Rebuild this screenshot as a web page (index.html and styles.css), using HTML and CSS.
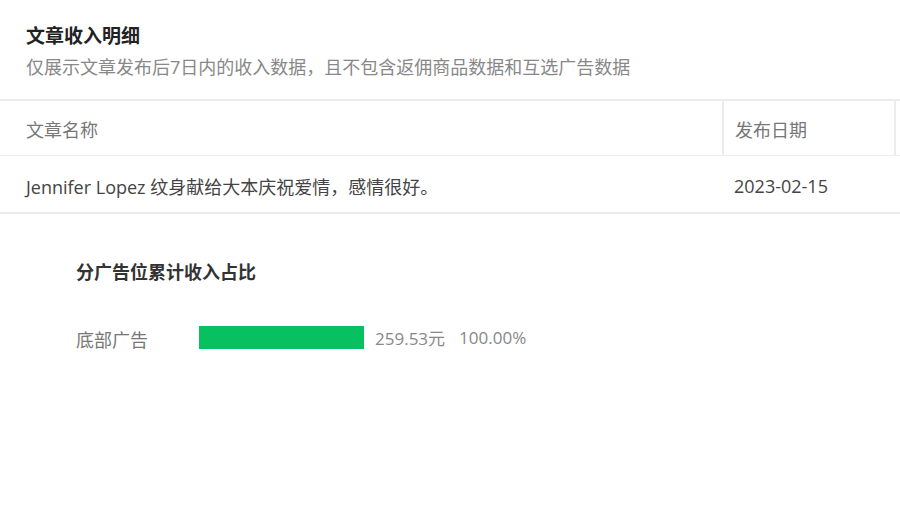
FILE: index.html
```html
<!DOCTYPE html>
<html lang="zh-CN">
<head>
    <meta charset="UTF-8">
    <title>文章收入明细</title>
    <link rel="stylesheet" href="styles.css">
</head>
<body>
    <div class="page">
        <div class="page-header">
            <h2 class="page-title">文章收入明细</h2>
            <p class="page-desc">仅展示文章发布后7日内的收入数据，且不包含返佣商品数据和互选广告数据</p>
        </div>

        <div class="table-wrap">
            <table class="income-table">
                <thead>
                    <tr>
                        <th class="col-title">文章名称</th>
                        <th class="col-date">发布日期</th>
                        <th class="col-more"></th>
                    </tr>
                </thead>
                <tbody>
                    <tr>
                        <td>Jennifer Lopez 纹身献给大本庆祝爱情，感情很好。</td>
                        <td>2023-02-15</td>
                        <td></td>
                    </tr>
                </tbody>
            </table>
        </div>

        <div class="ad-share">
            <h3 class="ad-share-title">分广告位累计收入占比</h3>
            <div class="ad-row">
                <span class="ad-name">底部广告</span>
                <div class="ad-bar-track">
                    <div class="ad-bar" style="width: 100%"></div>
                </div>
                <span class="ad-amount">259.53元</span>
                <span class="ad-percent">100.00%</span>
            </div>
        </div>
    </div>
</body>
</html>
```

FILE: styles.css
```css
:root {
    --text-main: #333333;
    --text-secondary: #888888;
    --text-header: #777777;
    --line-color: #ececec;
    --brand-green: #07c160;
}

body {
    margin: 0;
    background-color: #ffffff;
    font-family: "Open Sans", "Noto Sans CJK SC", sans-serif;
    color: var(--text-main);
}

.page {
    overflow: hidden;
}

.page-header {
    padding: 22px 26px 18px;
}

.page-title {
    margin: 0;
    font-size: 19px;
    line-height: 28px;
    font-weight: 700;
    color: #222222;
}

.page-desc {
    margin: 3px 0 0;
    font-size: 18px;
    line-height: 28px;
    color: var(--text-secondary);
}

/* table runs past the right edge, as in the cropped view */
.table-wrap {
    width: 1100px;
}

.income-table {
    width: 100%;
    border-collapse: collapse;
    font-size: 18px;
    text-align: left;
}

.income-table th {
    height: 52px;
    padding: 2px 11px 0;
    font-weight: 400;
    color: var(--text-header);
    border-top: 2px solid var(--line-color);
    border-bottom: 1px solid var(--line-color);
    border-right: 2px solid var(--line-color);
}

.income-table th.col-title {
    padding-left: 26px;
    width: 685px;
}

.income-table th.col-date {
    width: 148px;
}

.income-table td {
    height: 53px;
    padding: 3px 11px 0;
    color: #444444;
    border-bottom: 2px solid var(--line-color);
}

.income-table td:first-child {
    padding-left: 26px;
}

.ad-share {
    padding: 44px 76px 0;
}

.ad-share-title {
    margin: 0;
    font-size: 18px;
    line-height: 28px;
    font-weight: 700;
    color: var(--text-main);
}

.ad-row {
    display: flex;
    align-items: center;
    margin-top: 37px;
    font-size: 18px;
}

.ad-name {
    width: 123px;
    color: var(--text-header);
    padding-top: 3px;
}

.ad-bar-track {
    width: 165px;
    height: 23px;
}

.ad-bar {
    height: 100%;
    background-color: var(--brand-green);
}

.ad-amount {
    margin-left: 11px;
    color: var(--text-secondary);
    font-size: 17px;
}

.ad-percent {
    margin-left: 14px;
    color: var(--text-secondary);
    font-size: 17px;
}
```
